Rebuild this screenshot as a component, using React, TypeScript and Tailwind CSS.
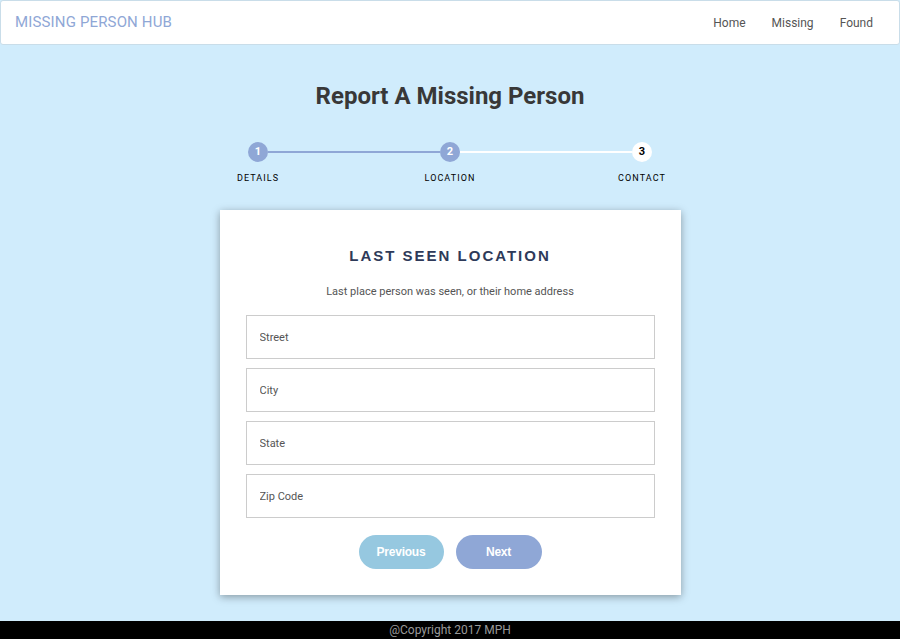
import React from "react";

const steps = [
  { n: 1, label: "DETAILS", done: true },
  { n: 2, label: "LOCATION", done: true },
  { n: 3, label: "CONTACT", done: false },
];

const fields = ["Street", "City", "State", "Zip Code"];

const StepCircle: React.FC<{ n: number; done: boolean }> = ({ n, done }) => (
  <div
    className={
      done
        ? "w-5 h-5 rounded-full bg-[#8fa7d6] text-white text-[11px] font-bold flex items-center justify-center"
        : "w-5 h-5 rounded-full bg-white text-black text-[11px] font-bold flex items-center justify-center"
    }
  >
    {n}
  </div>
);

const App: React.FC = () => {
  return (
    <div className="min-h-screen flex flex-col bg-[#d0ecfc] font-['Roboto',sans-serif]">
      <nav className="h-[45px] bg-white border border-[#c9dde9] rounded-[3px] flex items-center justify-between pl-[14px] pr-[26px]">
        <a className="text-[15px] text-[#8fa7d6] tracking-[0.01em]">MISSING PERSON HUB</a>
        <div className="flex items-center gap-[26px] text-[12px] text-[#555]">
          <a>Home</a>
          <a>Missing</a>
          <a>Found</a>
        </div>
      </nav>

      <main className="flex-1 flex flex-col items-center">
        <h1 className="mt-[36px] text-[24px] leading-[30px] font-bold text-[#383838]">
          Report A Missing Person
        </h1>

        <div className="mt-[31px] w-[404px] flex items-center">
          <StepCircle n={1} done />
          <div className="flex-1 h-[2px] bg-[#8fa7d6]" />
          <StepCircle n={2} done />
          <div className="flex-1 h-[2px] bg-white" />
          <StepCircle n={3} done={false} />
        </div>
        <div className="mt-[10px] w-[468px] flex justify-between">
          {steps.map((s) => (
            <div key={s.n} className="w-[84px] text-center text-[9px] leading-[12px] tracking-[0.12em] text-black">
              {s.label}
            </div>
          ))}
        </div>

        <div className="mt-[26px] w-[461px] bg-white shadow-[0_2px_8px_rgba(0,0,0,0.35)] px-[26px] pt-[36px] pb-[26px] flex flex-col items-center">
          <h2 className="text-[15px] leading-[20px] font-bold tracking-[2px] text-[#2e3a59] font-['Liberation_Sans',sans-serif]">
            LAST SEEN LOCATION
          </h2>
          <p className="mt-[18px] text-[11px] leading-[16px] text-[#555]">
            Last place person was seen, or their home address
          </p>
          <div className="mt-[15px] w-full flex flex-col gap-[9px]">
            {fields.map((f) => (
              <input
                key={f}
                placeholder={f}
                className="w-full h-[44px] border border-[#ccc] px-[13px] text-[11px] text-[#555] placeholder:text-[#555] outline-none"
              />
            ))}
          </div>
          <div className="mt-[17px] flex gap-[12px] font-['Liberation_Sans',sans-serif]">
            <button className="w-[85px] h-[34px] rounded-full bg-[#96c8e0] text-white text-[12px] font-bold tracking-[-0.02em]">
              Previous
            </button>
            <button className="w-[86px] h-[34px] rounded-full bg-[#8fa7d6] text-white text-[12px] font-bold tracking-[-0.02em]">
              Next
            </button>
          </div>
        </div>
      </main>

      <footer className="mt-[26px] h-[18px] bg-black text-center text-[12px] leading-[18px] text-[#9a9a9a]">
        @Copyright 2017 MPH
      </footer>
    </div>
  );
};

export default App;
